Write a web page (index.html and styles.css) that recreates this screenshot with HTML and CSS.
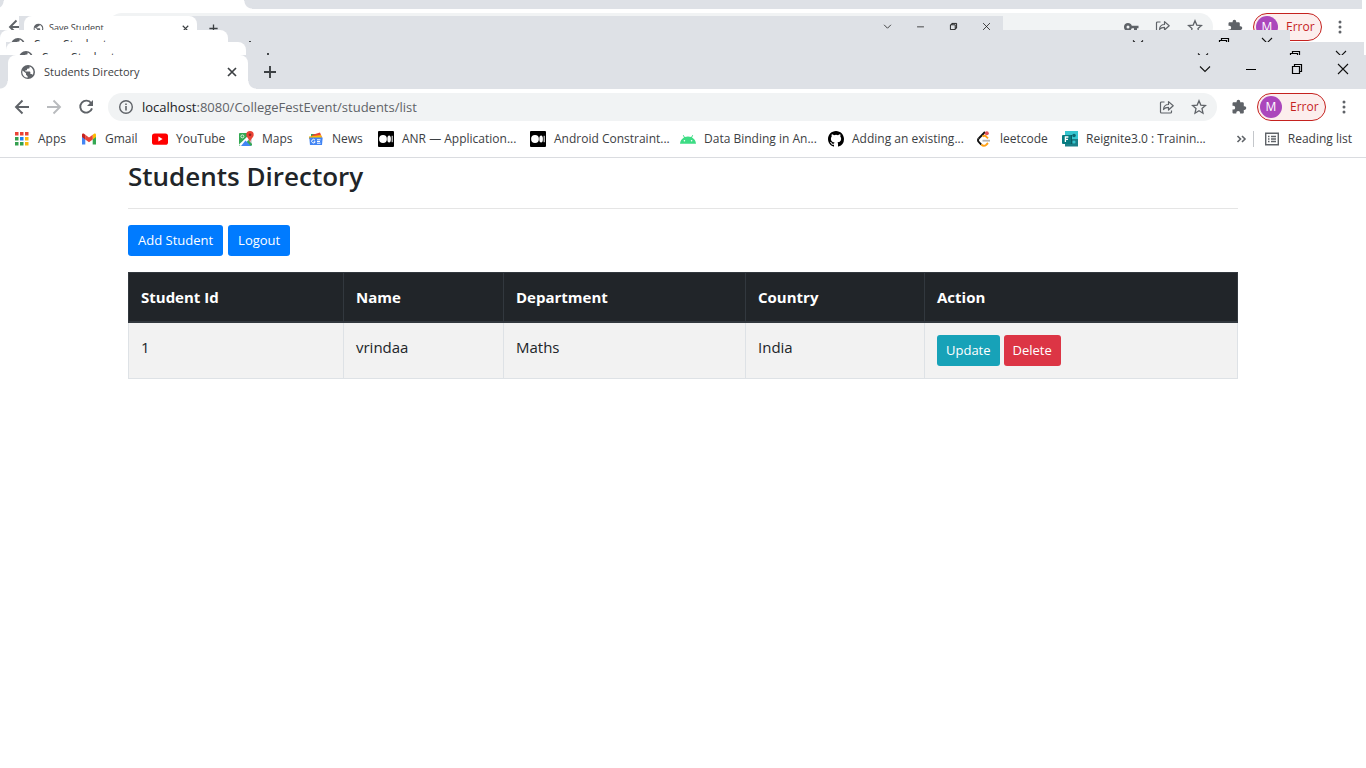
FILE: index.html
```
<!DOCTYPE html>
<html lang="en">
<head>
<meta charset="utf-8">
<title>Students Directory</title>
<link rel="stylesheet" href="styles.css">
</head>
<body>
<svg class="defs" aria-hidden="true">
  <symbol id="globe" viewBox="0 0 16 16"><circle cx="8" cy="8" r="7" fill="#5f6368"/><path d="M2.6 6.4 6 9.2v1.6l1.6 1.4v1.5C4.4 13.6 2.3 11 2.3 8zM9.6 2.6v1c0 .8-.6 1.2-1.4 1.2H7v1.4H5.4v1.4h4.2c.5 0 .8.4.8.8v1.7h.9c.6 0 1.100.4 1.300.9A5.800 5.800 0 0 0 9.600 2.600z" fill="#fff"/></symbol>
  <symbol id="close" viewBox="0 0 16 16"><path d="m4 4 8 8m0-8-8 8" stroke="#3c4043" stroke-width="1.7" fill="none"/></symbol>
  <symbol id="plus" viewBox="0 0 16 16"><path d="M8 2v12M2 8h12" stroke="#3c4043" stroke-width="1.9" fill="none"/></symbol>
  <symbol id="down" viewBox="0 0 16 16"><path d="m3 5.500 5 5 5-5" stroke="#111" stroke-width="1.100" fill="none"/></symbol>
  <symbol id="min" viewBox="0 0 16 16"><path d="M3 8.500h10" stroke="#000" fill="none"/></symbol>
  <symbol id="restore" viewBox="0 0 16 16"><path d="M3.500 5.500h7v7h-7zM5.500 5.500v-2h7v7h-2" stroke="#000" stroke-width="1.200" fill="none"/></symbol>
  <symbol id="exit" viewBox="0 0 16 16"><path d="m3 3 10 10m0-10L3 13" stroke="#111" stroke-width="1.100" fill="none"/></symbol>
  <symbol id="back" viewBox="0 0 16 16"><path d="M15 8H2m6.500-6.500L2 8l6.500 6.500" stroke="currentColor" stroke-width="1.900" fill="none"/></symbol>
  <symbol id="reload" viewBox="0 0 16 16"><path d="M13.200 4.200A6 6 0 1 0 14 9.400" stroke="#5f6368" stroke-width="1.900" fill="none"/><path d="M15 1v6H9z" fill="#5f6368"/></symbol>
  <symbol id="info" viewBox="0 0 16 16"><circle cx="8" cy="8" r="6.300" stroke="#5f6368" stroke-width="1.400" fill="none"/><path d="M7.200 7h1.600v4.500H7.200zM7.200 4.400h1.600V6H7.200z" fill="#5f6368"/></symbol>
  <symbol id="key" viewBox="0 0 16 16"><path fill-rule="evenodd" d="M5 4a4 4 0 1 0 3.800 5.200H11V12h3V9.200h1.500V6.800H8.800A4 4 0 0 0 5 4m0 2.500a1.500 1.500 0 1 1 0 3 1.500 1.500 0 0 1 0-3" fill="#5f6368"/></symbol>
  <symbol id="share" viewBox="0 0 16 16"><path d="M5.500 3h-3a1 1 0 0 0-1 1v9a1 1 0 0 0 1 1h9a1 1 0 0 0 1-1v-1.500M4.500 10.500c.3-3.500 2-5 5-5V2.600l4.700 4.200-4.700 4.200V8.300c-2.200 0-3.700.5-5 2.200z" stroke="#5f6368" stroke-width="1.200" stroke-linejoin="round" fill="none"/></symbol>
  <symbol id="star" viewBox="0 0 16 16"><path d="m8 1.800 1.800 4.300 4.700.4L11 9.600l1 4.600-4-2.400-4 2.400 1-4.600-3.500-3.100 4.700-.4z" stroke="#5f6368" stroke-width="1.300" fill="none"/></symbol>
  <symbol id="puzzle" viewBox="0 0 16 16"><path d="M12.800 7.300V4.500c0-.7-.6-1.200-1.300-1.200H9.200V2.500a1.800 1.800 0 0 0-3.600 0v.8H2.800c-.7 0-1.300.5-1.300 1.200v2.300h.8a1.900 1.900 0 0 1 0 3.800h-.8v2.800c0 .7.600 1.200 1.300 1.200h2.500v-.8a1.900 1.900 0 0 1 3.800 0v.8h2.400c.7 0 1.300-.5 1.300-1.200v-2.500h.7a1.800 1.800 0 0 0 0-3.600z" fill="#5f6368"/></symbol>
  <symbol id="dots" viewBox="0 0 16 16"><g fill="#5f6368"><circle cx="8" cy="3" r="1.500"/><circle cx="8" cy="8" r="1.500"/><circle cx="8" cy="13" r="1.500"/></g></symbol>
  <symbol id="medium" viewBox="0 0 16 16"><rect width="16" height="16" rx="1" fill="#000"/><circle cx="5" cy="8" r="3.900" fill="#fff"/><ellipse cx="11.100" cy="8" rx="1.800" ry="3.600" fill="#fff"/><path d="M14.200 4.800v6.400" stroke="#fff"/></symbol>
</svg>

<div class="desktop">
  <div class="ghost ghost-a" aria-hidden="true">
    <div class="strip"><div class="tab"></div></div>
    <div class="toolbar">
      <svg class="icon nav-icon"><use href="#back"/></svg>
      <div class="omnibox">
        <svg class="icon"><use href="#key"/></svg>
        <svg class="icon"><use href="#share"/></svg>
        <svg class="icon"><use href="#star"/></svg>
      </div>
      <svg class="icon"><use href="#puzzle"/></svg>
      <div class="profile"><span class="avatar">M</span><span>Error</span></div>
      <svg class="icon"><use href="#dots"/></svg>
    </div>
  </div>
  <div class="ghost ghost-b" aria-hidden="true">
    <div class="strip">
      <div class="tab"><svg class="icon"><use href="#globe"/></svg><span class="tab-title">Save Student</span><svg class="icon"><use href="#close"/></svg></div>
      <svg class="icon new"><use href="#plus"/></svg>
      <div class="controls"><span><svg class="icon"><use href="#down"/></svg></span><span><svg class="icon"><use href="#min"/></svg></span><span><svg class="icon"><use href="#restore"/></svg></span><span><svg class="icon"><use href="#exit"/></svg></span></div>
    </div>
  </div>
  <div class="ghost ghost-c" aria-hidden="true">
    <div class="strip">
      <div class="tab"><svg class="icon"><use href="#globe"/></svg><span class="tab-title">Save Student</span></div>
      <svg class="icon new"><use href="#plus"/></svg>
      <div class="controls"><span><svg class="icon"><use href="#down"/></svg></span><span><svg class="icon"><use href="#min"/></svg></span><span><svg class="icon"><use href="#restore"/></svg></span><span><svg class="icon"><use href="#exit"/></svg></span></div>
    </div>
  </div>
  <div class="ghost ghost-d" aria-hidden="true">
    <div class="strip">
      <div class="tab"><svg class="icon"><use href="#globe"/></svg><span class="tab-title">Save Student</span></div>
      <svg class="icon new"><use href="#plus"/></svg>
      <div class="controls"><span><svg class="icon"><use href="#down"/></svg></span><span><svg class="icon"><use href="#min"/></svg></span><span><svg class="icon"><use href="#restore"/></svg></span><span><svg class="icon"><use href="#exit"/></svg></span></div>
    </div>
  </div>

  <div class="window">
    <div class="strip">
      <div class="tab"><svg class="icon"><use href="#globe"/></svg><span class="tab-title">Students Directory</span><button type="button" aria-label="Close tab"><svg class="icon"><use href="#close"/></svg></button></div>
      <button class="new" type="button" aria-label="New tab"><svg class="icon"><use href="#plus"/></svg></button>
      <div class="controls">
        <button type="button" aria-label="Search tabs"><svg class="icon"><use href="#down"/></svg></button>
        <button type="button" aria-label="Minimize"><svg class="icon"><use href="#min"/></svg></button>
        <button type="button" aria-label="Restore"><svg class="icon"><use href="#restore"/></svg></button>
        <button type="button" aria-label="Close"><svg class="icon"><use href="#exit"/></svg></button>
      </div>
    </div>
    <div class="toolbar">
      <div class="nav">
        <button type="button" aria-label="Back"><svg class="icon"><use href="#back"/></svg></button>
        <button class="forward" type="button" aria-label="Forward"><svg class="icon"><use href="#back"/></svg></button>
        <button type="button" aria-label="Reload"><svg class="icon"><use href="#reload"/></svg></button>
      </div>
      <div class="omnibox">
        <button type="button" aria-label="Site information"><svg class="icon"><use href="#info"/></svg></button>
        <div class="url" role="textbox" aria-label="Address" tabindex="0"><span class="host">localhost</span>:8080/CollegeFestEvent/students/list</div>
        <button type="button" aria-label="Share"><svg class="icon"><use href="#share"/></svg></button>
        <button type="button" aria-label="Bookmark"><svg class="icon"><use href="#star"/></svg></button>
      </div>
      <button type="button" aria-label="Extensions"><svg class="icon"><use href="#puzzle"/></svg></button>
      <button class="profile" type="button"><span class="avatar">M</span><span>Error</span></button>
      <button type="button" aria-label="Menu"><svg class="icon"><use href="#dots"/></svg></button>
    </div>
    <div class="bookmarks">
      <nav class="links" aria-label="Bookmarks">
        <a href="#"><svg class="icon" viewBox="0 0 16 16"><path d="M1 1h3.500v3.500H1zM6 1h3.500v3.500H6zM11 1h3.500v3.500H11z" fill="#ea4335"/><path d="M1 6h3.500v3.500H1zM1 11h3.500v3.500H1zM6 11h3.500v3.500H6z" fill="#34a04f"/><path d="M6 6h3.500v3.500H6z" fill="#1a83f7"/><path d="M11 6h3.500v3.500H11zM11 11h3.500v3.500H11z" fill="#fbb80b"/></svg>Apps</a>
        <a href="#"><svg class="icon" viewBox="0 0 16 16"><path d="M1 13.500V4l3.300 2.500v7z" fill="#4285f4"/><path d="M11.700 13.500v-7L15 4v9.500z" fill="#34a853"/><path d="M11.700 3.800 13 2.800c1-.6 2 0 2 1.100V6l-3.300 2.500z" fill="#fbbc04"/><path d="M4.300 3.800 8 6.600l3.700-2.800v4.700L8 11.300 4.300 8.500z" fill="#ea4335"/><path d="M1 6V3.900C1 2.800 2.100 2.200 3 2.800l1.300 1v4.700z" fill="#c5221f"/></svg>Gmail</a>
        <a href="#"><svg class="icon" viewBox="0 0 16 16"><rect y="2.400" width="16" height="11.400" rx="2.600" fill="#f00"/><path d="m6.400 5.600 4.200 2.500-4.200 2.500z" fill="#fff"/></svg>YouTube</a>
        <a href="#"><svg class="icon" viewBox="0 0 16 16"><rect x="1" y="2" width="13" height="13" rx="1.500" fill="#34a853"/><path d="m14 5-9 10H2.500L1 13.500 12 3z" fill="#fff"/><path d="m7.500 9.500 5.500 5.500H3z" fill="#4285f4"/><path d="m9.500 8 4.500 5V5z" fill="#d5d9df"/><path d="M1 3.500C1 2.500 1.500 2 2.500 2H11L1 12z" fill="#34a853"/><circle cx="4.400" cy="5.400" r="1.500" stroke="#fff" stroke-width=".8" fill="none"/><path d="M12 0a3.700 3.700 0 0 0-3.700 3.700C8.300 6.500 11 7 12 11.500c1-4.500 3.700-5 3.700-7.800A3.700 3.700 0 0 0 12 0" fill="#ea4335"/><circle cx="12" cy="3.800" r="1.300" fill="#8c2520"/></svg>Maps</a>
        <a href="#"><svg class="icon" viewBox="0 0 16 16"><path d="M3 3h7l1 5H3z" fill="#34a853"/><path d="m4 4 8-2.500 2 5-9 3z" fill="#ea4335"/><path d="M1 5.500 13 4l1 4H1z" fill="#fbbc04"/><path d="M1.300 6.500h13.400L14 14H2z" fill="#4285f4"/><path d="M7 9.200a1.800 1.800 0 1 0 .2 1.600H5.800M9 8.800h3.500M9 10.500h3M9 12.200h3.500" stroke="#fff" fill="none"/></svg>News</a>
        <a href="#"><svg class="icon"><use href="#medium"/></svg>ANR — Application...</a>
        <a href="#"><svg class="icon"><use href="#medium"/></svg>Android Constraint...</a>
        <a href="#"><svg class="icon" viewBox="0 0 16 16"><path d="M0 12.800a8 8 0 0 1 4-6.300L2.800 4.300l.7-.4 1.300 2.200a9 9 0 0 1 6.400 0l1.300-2.200.7.400L12 6.500a8 8 0 0 1 4 6.300z" fill="#3ddc84"/><circle cx="4.400" cy="9.800" r=".8" fill="#fff"/><circle cx="11.600" cy="9.800" r=".8" fill="#fff"/></svg>Data Binding in An...</a>
        <a href="#"><svg class="icon" viewBox="0 0 16 16"><path d="M8 0C3.580 0 0 3.580 0 8c0 3.540 2.290 6.530 5.470 7.590.4.070.55-.17.55-.38 0-.19-.01-.82-.01-1.490-2.010.37-2.530-.49-2.690-.94-.09-.23-.48-.94-.82-1.130-.28-.15-.68-.52-.01-.53.63-.01 1.080.58 1.230.82.72 1.210 1.870.87 2.330.66.070-.52.280-.87.510-1.070-1.780-.2-3.640-.89-3.640-3.950 0-.87.310-1.590.82-2.150-.08-.2-.36-1.020.08-2.120 0 0 .67-.21 2.200.82a7.600 7.600 0 0 1 4 0c1.530-1.040 2.200-.82 2.200-.82.44 1.100.16 1.920.08 2.120.51.56.82 1.270.82 2.150 0 3.070-1.870 3.750-3.650 3.950.29.25.54.73.54 1.480 0 1.070-.01 1.930-.01 2.200 0 .21.15.46.55.38A8 8 0 0 0 16 8c0-4.420-3.580-8-8-8" fill="#000"/></svg>Adding an existing...</a>
        <a href="#"><svg class="icon" viewBox="0 0 16 16"><path d="m9 1-6.300 6.500" stroke="#111" stroke-width="1.900" fill="none"/><path d="M2.700 7.500c-1 1-1 2.400 0 3.400l2.600 2.700" stroke="#111" stroke-width="1.900" fill="none"/><path d="M5.300 13.500c1.500 1.600 3.500 1.600 5 .2L12 12M6.500 5.500c1.500-1 3-.8 4 .3L12 7.300" stroke="#ffa116" stroke-width="1.900" fill="none"/><path d="M6.500 9.700H14" stroke="#b3b3b3" stroke-width="1.800"/><circle cx="10.800" cy="2.300" r="2" fill="#e0525a"/></svg>leetcode</a>
        <a href="#"><svg class="icon" viewBox="0 0 16 16"><path d="M3 0h13v8H3z" fill="#37c6d0"/><path d="M3 8h13v7.500H3z" fill="#1a7f88"/><path d="M4 4h6v9H4z" fill="#0b5c63"/><circle cx="12" cy="4.500" r="1.800" fill="#0b6a73"/><circle cx="12" cy="11" r="1.600" fill="#37c6d0"/><rect y="4" width="9" height="9" rx="1" fill="#057b80"/><path d="M3.400 11V6h3M3.400 8.400h2.600" stroke="#fff" stroke-width="1.300" fill="none"/></svg>Reignite3.0 : Trainin...</a>
      </nav>
      <button class="more" type="button" aria-label="More bookmarks"><svg class="icon" viewBox="0 0 16 16"><path d="M3.500 5l3 3-3 3m4.500-6 3 3-3 3" stroke="#5f6368" stroke-width="1.600" fill="none"/></svg></button>
      <button class="reading" type="button"><svg class="icon" viewBox="0 0 16 16"><path d="M1.700 2.200h12.600v11.600H1.700z" stroke="#5f6368" stroke-width="1.400" fill="none"/><path d="M4 5.500h1.500M4 8h1.500M4 10.500h1.500M7 5.500h5M7 8h5M7 10.500h5" stroke="#5f6368" stroke-width="1.300"/></svg>Reading list</button>
    </div>

    <main class="container">
      <h3>Students Directory</h3>
      <hr>
      <div class="actions"><a class="btn primary" href="#">Add Student</a><a class="btn primary" href="#">Logout</a></div>
      <table>
        <colgroup><col class="c-id"><col class="c-name"><col class="c-dept"><col class="c-country"><col></colgroup>
        <thead><tr><th>Student Id</th><th>Name</th><th>Department</th><th>Country</th><th>Action</th></tr></thead>
        <tbody><tr><td>1</td><td>vrindaa</td><td>Maths</td><td>India</td><td><div class="row-actions"><a class="btn info" href="#">Update</a><a class="btn danger" href="#">Delete</a></div></td></tr></tbody>
      </table>
    </main>
  </div>
</div>
</body>
</html>
```
FILE: styles.css
```
* { box-sizing: border-box; }
body { margin: 0; background: #fff; color: #212529; font: 15px/24px "Open Sans", "Noto Sans", sans-serif; }
button { border: 0; padding: 0; background: none; color: inherit; font: inherit; display: flex; align-items: center; justify-content: center; }
a { color: inherit; text-decoration: none; }
.defs { position: absolute; width: 0; height: 0; }
.icon { width: 16px; height: 16px; flex: none; display: block; }

.desktop { position: relative; padding-top: 55px; min-height: 100vh; overflow: hidden; }

/* Browser chrome */
.strip { display: flex; align-items: flex-start; height: 34px; padding-left: 8px; background: #dee1e6; }
.tab { position: relative; display: flex; align-items: center; gap: 8px; width: 240px; height: 34px; padding: 0 8px 0 12px; border-radius: 8px 8px 0 0; background: #fff; color: #3c4043; font-size: 12px; line-height: 16px; }
/* Concave feet where the active tab meets the toolbar */
.tab::before, .tab::after { content: ""; position: absolute; bottom: 0; width: 8px; height: 8px; }
.tab::before { right: 100%; background: radial-gradient(circle at 0 0, transparent 7px, #fff 8px); }
.tab::after { left: 100%; background: radial-gradient(circle at 100% 0, transparent 7px, #fff 8px); }
.tab-title { flex: 1; font-size: 11px; white-space: nowrap; }
.new { margin: 9px 0 0 14px; }
.controls { display: flex; margin-left: auto; height: 28px; }
.controls > * { display: flex; align-items: center; justify-content: center; width: 46px; }
.toolbar { display: flex; align-items: center; gap: 10px; height: 36px; padding: 0 14px; color: #5f6368; }
.nav { display: flex; gap: 16px; margin-right: 4px; }
.forward { color: #b9bbbe; }
.forward .icon { transform: scaleX(-1); }
.omnibox { display: flex; align-items: center; gap: 16px; flex: 1; height: 28px; padding: 0 10px; margin-right: 4px; border-radius: 14px; background: #f1f3f4; }
.url { flex: 1; margin-left: -8px; font-size: 13px; line-height: 20px; white-space: nowrap; }
.host { color: #202124; }
.profile { display: flex; align-items: center; gap: 8px; width: 69px; height: 28px; padding-left: 2px; justify-content: flex-start; border: 1px solid #c5221f; border-radius: 14px; background: #fceeed; color: #c5221f; font-size: 12px; line-height: 16px; }
.avatar { width: 22px; height: 22px; border-radius: 50%; background: #ab47bc; color: #fff; line-height: 22px; text-align: center; }
.bookmarks { display: flex; align-items: center; height: 33px; padding: 0 14px 4px 14px; border-bottom: 1px solid #dadce0; color: #3c4043; font-size: 12px; line-height: 16px; }
.links { display: grid; grid-template-columns: 67px 71px 86px 70px 70px 152px 150px 148px 148px 86px auto; flex: 1; min-width: 0; }
.links a { display: flex; align-items: center; gap: 8px; white-space: nowrap; }
.more { width: 23px; height: 16px; border-right: 1px solid #c4c7cb; }
.reading { gap: 8px; padding-left: 10px; white-space: nowrap; }

/* Windows left behind the active one */
.ghost { position: absolute; overflow: hidden; background: #fff; }
.ghost-a { top: 0; left: 0; right: 0; height: 42px; }
.ghost-a .strip { height: 9px; padding-left: 4px; margin-right: 4px; }
.ghost-a .tab { height: 9px; border-radius: 0; }
.ghost-a .toolbar { padding: 0 18px 0 8px; }
.ghost-a .omnibox { margin-left: 74px; justify-content: flex-end; }
.ghost-b { top: 16px; left: 19px; width: 984px; height: 14px; }
.ghost-b .strip { padding-left: 5px; }
.ghost-b .tab { width: 173px; height: 24px; gap: 5px; padding: 0 6px 0 9px; }
.ghost-b .tab-title { font-size: 9px; }
.ghost-b .icon { width: 11px; height: 11px; }
.ghost-b .new { margin: 7px 0 0 11px; }
.ghost-b .controls { height: 21px; }
.ghost-b .controls > * { width: 33px; }
.ghost-c { top: 30px; left: 0; right: 78px; height: 12px; border-right: 2px solid #dee1e6; margin-right: -2px; }
.ghost-c .strip { padding-left: 0; }
.ghost-c .tab { width: 228px; height: 30px; gap: 8px; padding-left: 10px; }
.ghost-c .controls { height: 26px; }
.ghost-c .controls > * { width: 43px; }
.ghost-d { top: 42px; left: 6px; right: 2px; height: 13px; }
.ghost-d .strip { padding-left: 0; }
.ghost-d .tab { height: 32px; }
.ghost-c .tab-title, .ghost-d .tab-title { font-size: 12px; }

/* Page */
.container { max-width: 1140px; margin: 0 auto; padding: 1px 15px; }
h3 { margin: 0 0 15px; font-size: 26px; font-weight: 600; line-height: 34px; }
hr { margin: 0 0 16px; border: 0; border-top: 1px solid #e5e5e5; }
.actions { display: flex; gap: 5px; margin-bottom: 16px; }
.row-actions { display: flex; gap: 4px; }
.btn { padding: 5px 8px; border: 1px solid transparent; border-radius: 3px; color: #fff; font-size: 13px; line-height: 19px; }
.actions .btn { padding: 5px 9px; }
.primary { background: #007bff; }
.info { background: #17a2b8; }
.danger { background: #dc3545; }
table { width: 100%; table-layout: fixed; border-collapse: collapse; }
.c-id { width: 215px; }
.c-name { width: 160px; }
.c-dept { width: 242px; }
.c-country { width: 179px; }
th, td { padding: 12px; border: 1px solid #dee2e6; text-align: left; vertical-align: top; }
th { background: #212529; border-color: #32383e; border-bottom-width: 2px; color: #fff; font-weight: 700; }
td { background: #f2f2f2; }
```
